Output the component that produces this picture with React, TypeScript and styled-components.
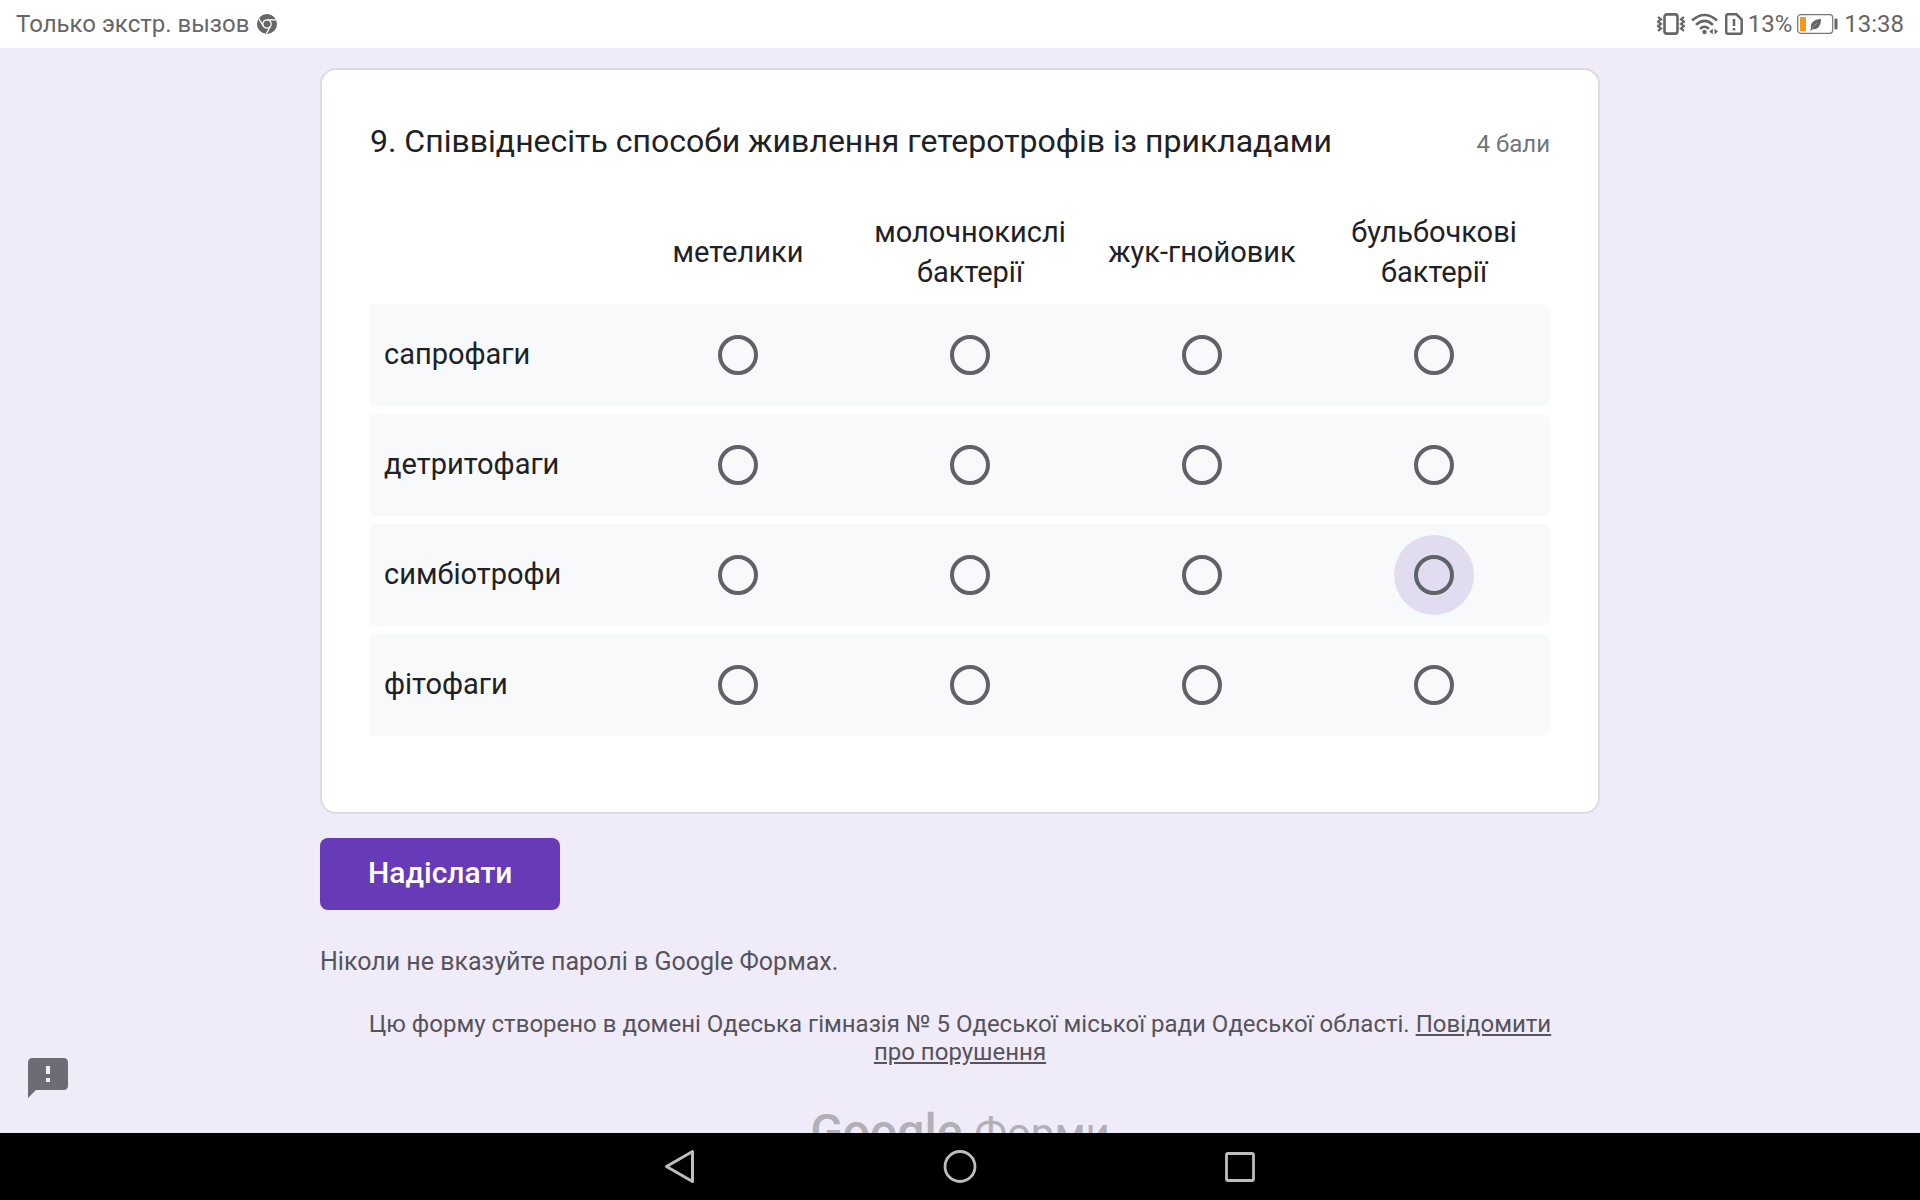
import React, { useState } from "react";
import styled, { createGlobalStyle } from "styled-components";
import { MdFeedback } from "react-icons/md";

const GlobalStyle = createGlobalStyle`
  * { box-sizing: border-box; }
  body { margin: 0; background: #000; font-family: Roboto, "Noto Sans", sans-serif; }
`;

const Screen = styled.div`
  display: flex;
  flex-direction: column;
  height: 100vh;
  overflow: hidden;
`;

const StatusBar = styled.header`
  flex: none;
  display: flex;
  align-items: center;
  justify-content: space-between;
  height: 48px;
  padding: 0 16px;
  background: #fff;
  color: #666;
  font-size: 24px;
  line-height: 32px;
`;

const StatusGroup = styled.div<{ $gap: number }>`
  display: flex;
  align-items: center;
  gap: ${(p) => p.$gap}px;
`;

const Page = styled.main`
  position: relative;
  flex: 1;
  min-height: 0;
  overflow: hidden;
  padding-top: 20px;
  background: #f0ebf8;
`;

const Form = styled.form`
  width: 100%;
  max-width: 1280px;
  margin: 0 auto;
`;

const Card = styled.section`
  padding: 47px 48px 68px;
  background: #fff;
  border: 2px solid #dadce0;
  border-radius: 16px;
`;

const Question = styled.div`
  display: flex;
  justify-content: space-between;
  align-items: baseline;
  gap: 32px;
  margin-bottom: 39px;
`;

const Title = styled.h2`
  margin: 0;
  color: #202124;
  font-family: Roboto, sans-serif;
  font-size: 32px;
  font-weight: 400;
  line-height: 48px;
`;

const Points = styled.span`
  color: #70757a;
  font-size: 24px;
  line-height: 32px;
  white-space: nowrap;
`;

const Grid = styled.table`
  width: 100%;
  table-layout: fixed;
  border-collapse: separate;
  border-spacing: 0 8px;
  color: #202124;
  font-size: 29px;
  line-height: 40px;
`;

const LabelHead = styled.td`
  width: 252px;
  padding: 0;
`;

const ColumnHead = styled.th`
  padding: 0 0 4px;
  font-weight: 400;
`;

const RowHead = styled.th`
  padding: 0 14px 2px;
  background: #f8f9fa;
  border-radius: 4px 0 0 4px;
  font-weight: 400;
  text-align: left;
`;

const Cell = styled.td`
  height: 102px;
  padding: 0;
  background: #f8f9fa;
  &:last-child { border-radius: 0 8px 8px 0; }
`;

const Target = styled.label<{ $pressed: boolean }>`
  display: flex;
  align-items: center;
  justify-content: center;
  width: 80px;
  height: 80px;
  margin: 0 auto;
  border-radius: 50%;
  background: ${(p) => (p.$pressed ? "#e1dcf0" : "transparent")};
`;

const Radio = styled.input`
  appearance: none;
  width: 40px;
  height: 40px;
  margin: 0;
  border: 4px solid #5f6368;
  border-radius: 50%;
  outline: none;
  &:checked {
    border-color: #673ab7;
    background: radial-gradient(#673ab7 10px, transparent 11px);
  }
`;

const Submit = styled.button`
  display: block;
  height: 72px;
  margin-top: 24px;
  padding: 0 48px 2px;
  border: 0;
  border-radius: 8px;
  background: #673ab7;
  color: #fff;
  font-family: Roboto, sans-serif;
  font-size: 30px;
  font-weight: 500;
  line-height: 40px;
`;

const Warning = styled.p`
  margin: 36px 0 0;
  color: #56535b;
  font-size: 25px;
  line-height: 32px;
`;

const Origin = styled.p`
  margin: 32px 0 0;
  padding: 0 48px;
  color: #56535b;
  font-size: 24px;
  line-height: 28px;
  text-align: center;
`;

const ReportLink = styled.a`
  color: inherit;
  text-decoration: underline;
`;

const Brand = styled.div`
  display: flex;
  justify-content: center;
  align-items: baseline;
  gap: 12px;
  margin-top: 36px;
  color: #b3afb9;
  font-size: 42px;
  line-height: 60px;
`;

const BrandName = styled.span`
  font-size: 48px;
  font-weight: 500;
`;

const Feedback = styled.button`
  position: absolute;
  left: 24px;
  bottom: 31px;
  display: flex;
  padding: 0;
  border: 0;
  background: none;
  color: #6f6b74;
`;

const NavBar = styled.nav`
  flex: none;
  display: flex;
  align-items: center;
  justify-content: center;
  gap: 240px;
  height: 67px;
  background: #000;
`;

const NavButton = styled.button`
  display: flex;
  padding: 0;
  border: 0;
  background: none;
  color: #bdbdbd;
`;

const ChromeIcon = () => (
  <svg width="20" height="20" viewBox="0 0 20 20" aria-hidden="true">
    <circle cx="10" cy="10" r="10" fill="#666" />
    <g fill="none" stroke="#fff" strokeWidth="1.2">
      <circle cx="10" cy="10" r="4.2" />
      <path d="M10 5.8H19M6.4 12.1L1.8 4.6M13.6 12.1L9.4 19.6" />
    </g>
  </svg>
);

const VibrateIcon = () => (
  <svg width="28" height="22" viewBox="0 0 28 22" fill="none" stroke="#666" aria-hidden="true">
    <rect x="7.5" y="1.4" width="13" height="19.2" rx="2.4" strokeWidth="2.6" />
    <path
      d="M1 4l3 2.300-3 2.300 3 2.300-3 2.300 3 2.300-3 2.300M27 4l-3 2.300 3 2.300-3 2.300 3 2.300-3 2.300 3 2.300"
      strokeWidth="2.2"
    />
  </svg>
);

const WifiIcon = () => (
  <svg width="28" height="22" viewBox="0 0 28 22" fill="none" stroke="#666" strokeWidth="2.5" aria-hidden="true">
    <path d="M1 7.500Q13.500-3.500 26 7.500M5 11.800Q13.500 4 22 11.800M9 15.800Q13.500 11.600 18 15.800" />
    <circle cx="13.500" cy="19" r="2.200" fill="#666" stroke="none" />
    <path d="M21.800 15.500v6l-3.500-3zM23.500 15.500v6l3.500-3z" fill="#666" stroke="none" />
  </svg>
);

const SimIcon = () => (
  <svg width="18" height="22" viewBox="0 0 18 22" fill="none" stroke="#666" strokeWidth="2.500" aria-hidden="true">
    <path d="M3 1.300h8.500l5.200 5.200v12.400a1.800 1.800 0 0 1-1.800 1.800H3a1.800 1.800 0 0 1-1.800-1.800V3A1.800 1.800 0 0 1 3 1.300z" />
    <path d="M9 6v7M9 15v2.600" />
  </svg>
);

const BatteryIcon = () => (
  <svg width="42" height="20" viewBox="0 0 42 20" aria-hidden="true">
    <rect x="0.700" y="0.700" width="35" height="18.600" rx="3" fill="none" stroke="#777" strokeWidth="1.200" />
    <rect x="3" y="3" width="6" height="14" fill="#f7981d" />
    <path d="M13 16.500l1-2.200C13.200 8.500 16.500 5.500 24 5c0 7-3.200 11-8.600 10.200L14 16.500z" fill="#666" />
    <path d="M15 14l5-5" stroke="#bbb" strokeWidth="0.600" />
    <rect x="37.500" y="4.500" width="3" height="11" rx="1" fill="#666" />
  </svg>
);

const columns = ["метелики", "молочнокислі бактерії", "жук-гнойовик", "бульбочкові бактерії"];
const rows = ["сапрофаги", "детритофаги", "симбіотрофи", "фітофаги"];

export default function App() {
  const [answers, setAnswers] = useState<Record<string, string>>({});

  return (
    <>
      <GlobalStyle />
      <Screen>
        <StatusBar>
          <StatusGroup $gap={8}>
            <span>Только экстр. вызов</span>
            <ChromeIcon />
          </StatusGroup>
          <StatusGroup $gap={5}>
            <StatusGroup $gap={6}>
              <VibrateIcon />
              <WifiIcon />
              <SimIcon />
            </StatusGroup>
            <span>13%</span>
            <BatteryIcon />
            <span>13:38</span>
          </StatusGroup>
        </StatusBar>
        <Page>
          <Form onSubmit={(e) => e.preventDefault()}>
            <Card>
              <Question>
                <Title>9. Співвіднесіть способи живлення гетеротрофів із прикладами</Title>
                <Points>4 бали</Points>
              </Question>
              <Grid>
                <thead>
                  <tr>
                    <LabelHead />
                    {columns.map((c) => (
                      <ColumnHead key={c} scope="col">{c}</ColumnHead>
                    ))}
                  </tr>
                </thead>
                <tbody>
                  {rows.map((r) => (
                    <tr key={r}>
                      <RowHead scope="row">{r}</RowHead>
                      {columns.map((c) => (
                        <Cell key={c}>
                          <Target $pressed={r === "симбіотрофи" && c === "бульбочкові бактерії"}>
                            <Radio
                              type="radio"
                              name={r}
                              value={c}
                              aria-label={`${r}: ${c}`}
                              checked={answers[r] === c}
                              onChange={() => setAnswers({ ...answers, [r]: c })}
                            />
                          </Target>
                        </Cell>
                      ))}
                    </tr>
                  ))}
                </tbody>
              </Grid>
            </Card>
            <Submit type="submit">Надіслати</Submit>
            <Warning>Ніколи не вказуйте паролі в Google Формах.</Warning>
            <Origin>
              Цю форму створено в домені Одеська гімназія № 5 Одеської міської ради Одеської області.{" "}
              <ReportLink href="#report">Повідомити про порушення</ReportLink>
            </Origin>
            <Brand>
              <BrandName>Google</BrandName>
              <span>Форми</span>
            </Brand>
          </Form>
          <Feedback type="button" aria-label="Повідомити про проблему">
            <MdFeedback size={48} />
          </Feedback>
        </Page>
        <NavBar>
          <NavButton type="button" aria-label="Назад">
            <svg width="40" height="40" viewBox="0 0 40 40" fill="none" stroke="currentColor" strokeWidth="3" strokeLinejoin="round">
              <path d="M32.500 4.500v30L6.500 19.500z" />
            </svg>
          </NavButton>
          <NavButton type="button" aria-label="Головний екран">
            <svg width="40" height="40" viewBox="0 0 40 40" fill="none" stroke="currentColor" strokeWidth="2.800">
              <circle cx="20" cy="19.500" r="15" />
            </svg>
          </NavButton>
          <NavButton type="button" aria-label="Нещодавні">
            <svg width="40" height="40" viewBox="0 0 40 40" fill="none" stroke="currentColor" strokeWidth="2.800">
              <rect x="6.500" y="6.500" width="27" height="27" rx="1.500" />
            </svg>
          </NavButton>
        </NavBar>
      </Screen>
    </>
  );
}
